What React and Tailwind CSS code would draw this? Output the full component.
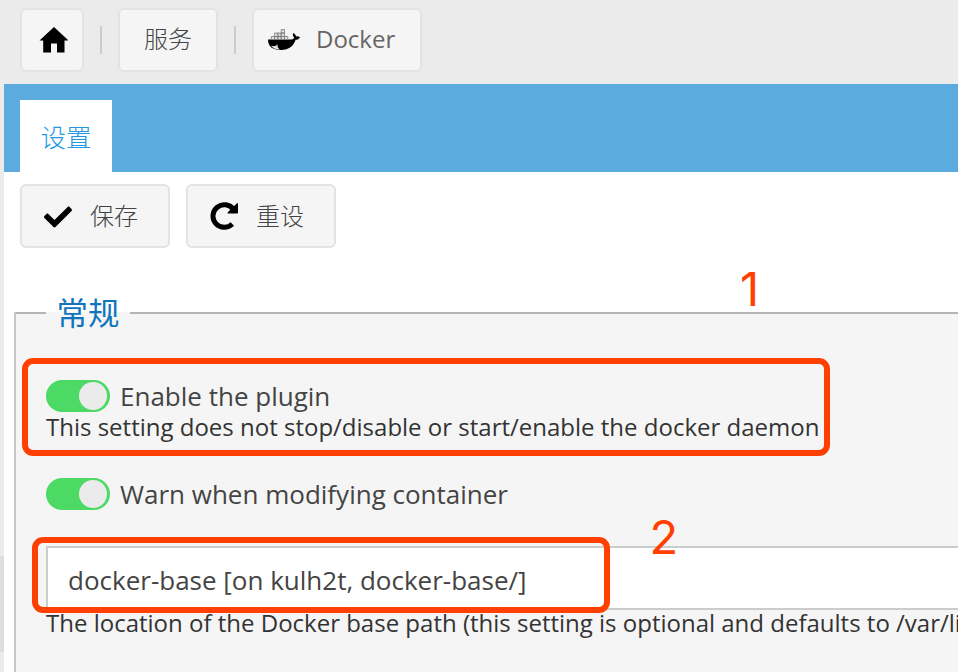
import { FaCheck } from "react-icons/fa";

const cjk = "font-['Open_Sans','Noto_Sans_CJK_SC',sans-serif]";

function HomeIcon() {
  return (
    <svg className="h-8 w-8" viewBox="0 0 32 32">
      <path d="M18 3L3.500 16.500H7.200V28.500H15V19.500h6v9h7.500V16.500h4z" />
    </svg>
  );
}

function ResetIcon() {
  return (
    <svg className="h-7 w-7" viewBox="0 0 28 28">
      <path d="M22.300 22A11.300 11.300 0 1 1 23.500 7.500" fill="none" stroke="#000" strokeWidth="5" />
      <path d="M27.200 1a.8.800 0 0 1 .8.800V10.700a.8.800 0 0 1-.8.800H18.300c-.8 0-1-.8-.5-1.300z" />
    </svg>
  );
}

function DockerIcon() {
  return (
    <svg className="h-[22px] w-8 shrink-0" viewBox="0 0 32 22">
      <path d="M0 10.500h23.500c1.500 0 2.400-.8 2.600-2-1.200-1.300-1.600-2.900-.8-4.500 1.700 1 2.600 2.200 2.800 3.500 1.500-.3 2.700-.1 3.900.7-.8 1.700-2.400 2.600-4.400 2.600C25.500 17 21 21 13 21 4.500 21 0 17.500 0 10.500z" />
      <path d="M3 16.800c1.900.6 4.700.4 6.500-.7-.1 2 .7 3.300 2.400 4.400C7.500 20.400 4.500 19.100 3 16.800z" fill="#e5e5e5" />
      <circle cx="9" cy="16.500" r="1" fill="#999" />
      <g fill="#e2e2e2" stroke="#777" strokeWidth=".8">
        <path d="M3.300 7.500h3.300v3H3.300zM6.600 7.500h3.300v3H6.600zM9.900 7.500h3.300v3H9.900zM13.200 7.500h3.300v3h-3.300zM16.500 7.500h3.300v3h-3.300zM6.600 4h3.300v3.500H6.600zM9.900 4h3.300v3.500H9.900zM13.200 4h3.300v3.500h-3.300zM13.200.6h3.300V4h-3.300z" />
      </g>
    </svg>
  );
}

function Switch() {
  return (
    <span className="flex h-8 w-16 shrink-0 items-center justify-end rounded-full bg-[#4cd964] pr-[3px]">
      <span className="h-7 w-7 rounded-full bg-[#ebebeb]" />
    </span>
  );
}

const crumb = "flex h-16 items-center rounded-[6px] border-2 border-[#e3e3e3] bg-[#f5f5f5] text-[24px] text-[#666]";

export default function App() {
  return (
    <div className={`relative flex h-[672px] w-[958px] flex-col overflow-hidden bg-white text-[#444] ${cjk}`}>
      <header className="flex h-[84px] shrink-0 bg-[#ebebeb] pl-5 pt-2">
        <div className={`${crumb} w-16 justify-center`}><HomeIcon /></div>
        <div className="ml-4 mt-[18px] h-7 w-[2px] bg-[#ccc]" />
        <div className={`${crumb} ml-4 w-[100px] justify-center pb-[2px] font-light`}>
          <span className="text-[#444]">服务</span>
        </div>
        <div className="ml-4 mt-[18px] h-7 w-[2px] bg-[#ccc]" />
        <div className={`${crumb} ml-4 w-[170px] pl-[14px]`}>
          <DockerIcon />
          <span className="ml-4 pb-[2px]">Docker</span>
        </div>
      </header>
      <div className="flex min-h-0 flex-1">
        <aside className="w-1 shrink-0 bg-[#ebebeb] pt-[472px]">
          <div className="h-24 bg-[#dedede]" />
        </aside>
        <main className="flex min-w-0 flex-1 flex-col">
          <nav className="flex h-[88px] shrink-0 bg-[#5cabdf] pl-4 pt-4">
            <div className="flex w-[92px] items-center justify-center bg-white pt-[2px] text-[25.500px] font-light text-[#2398e2]">设置</div>
          </nav>
          <div className="flex gap-4 pl-4 pt-3">
            <button className={`${crumb} w-[150px] pl-[22px] font-light`}>
              <FaCheck className="mt-[2px] h-7 w-7 text-black" />
              <span className="ml-[18px] pb-px text-[#444]">保存</span>
            </button>
            <button className={`${crumb} w-[150px] pl-[22px] font-light`}>
              <ResetIcon />
              <span className="ml-[18px] pb-px text-[#444]">重设</span>
            </button>
          </div>
          <section className="ml-[10px] mt-16 h-[360px] shrink-0 border-l-2 border-[#c8c8c8] bg-[#f5f5f5]">
            <div className="flex h-[2px] items-center">
              <div className="h-[2px] w-[30px] bg-[#b5b5b5]" />
              <h2 className="flex w-[84px] justify-center pb-px text-[31.500px] leading-[2px] text-[#0f75bc]">常规</h2>
              <div className="h-[2px] flex-1 bg-[#b5b5b5]" />
            </div>
            <div className="pl-[30px] pt-[66px]">
              <div className="flex h-8 items-center text-[26px]">
                <Switch /><span className="ml-[10px] whitespace-nowrap">Enable the plugin</span>
              </div>
              <p className="h-8 whitespace-nowrap text-[24px] leading-[30px] text-[#333]">This setting does not stop/disable or start/enable the docker daemon</p>
              <div className="mt-[34px] flex h-8 items-center text-[26px]">
                <Switch /><span className="ml-[10px] whitespace-nowrap">Warn when modifying container</span>
              </div>
              <div className="mt-9 flex h-16 items-center whitespace-nowrap border-y-2 border-l-2 border-[#ccc] bg-white pl-5 pt-1 text-[26px]">docker-base [on kulh2t, docker-base/]</div>
              <p className="h-8 whitespace-nowrap text-[24px] leading-[26px] text-[#333]">The location of the Docker base path (this setting is optional and defaults to /var/li</p>
            </div>
          </section>
        </main>
      </div>
      <div className="absolute left-[22px] top-[357.500px] h-[98.500px] w-[808px] rounded-[11px] border-[6px] border-[#ff4000]" />
      <div className="absolute left-[32px] top-[537px] h-[76px] w-[578px] rounded-[11px] border-[6px] border-[#ff4000]" />
      <div className="absolute left-[740px] top-[264px] font-['Inter',sans-serif] text-[47px] leading-[50px] text-[#ff4000]">1</div>
      <div className="absolute left-[649.500px] top-[512px] font-['Inter',sans-serif] text-[47px] leading-[50px] text-[#ff4000]">2</div>
    </div>
  );
}
